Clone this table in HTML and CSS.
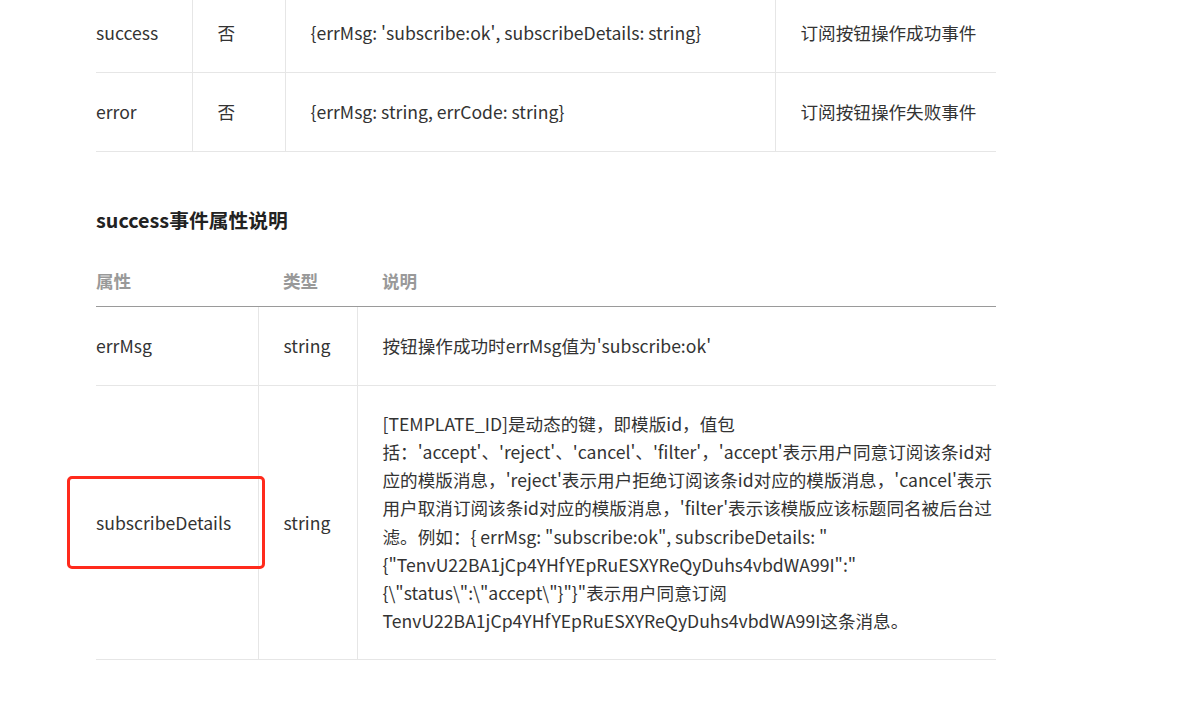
FILE: index.html
```html
<!DOCTYPE html>
<html lang="zh-CN">
<head>
<meta charset="utf-8">
<title>subscribe events</title>
<link rel="stylesheet" href="styles.css">
</head>
<body>
<div class="doc">
  <table class="tbl tbl-events">
    <colgroup><col class="c-ev1"><col class="c-ev2"><col class="c-ev3"><col class="c-ev4"></colgroup>
    <tbody>
      <tr><td>success</td><td>否</td><td>{errMsg: 'subscribe:ok', subscribeDetails: string}</td><td>订阅按钮操作成功事件</td></tr>
      <tr><td>error</td><td>否</td><td>{errMsg: string, errCode: string}</td><td>订阅按钮操作失败事件</td></tr>
    </tbody>
  </table>

  <h2 class="sec-title">success事件属性说明</h2>

  <table class="tbl tbl-props">
    <colgroup><col class="c-p1"><col class="c-p2"><col class="c-p3"></colgroup>
    <thead>
      <tr><th>属性</th><th>类型</th><th>说明</th></tr>
    </thead>
    <tbody>
      <tr><td>errMsg</td><td>string</td><td>按钮操作成功时errMsg值为'subscribe:ok'</td></tr>
      <tr>
        <td class="marked">subscribeDetails<span class="mark-box"></span></td>
        <td>string</td>
        <td class="desc">[TEMPLATE_ID]是动态的键，即模版id，值包<br>括：'accept'、'reject'、'cancel'、'filter'，'accept'表示用户同意订阅该条id对<br>应的模版消息，'reject'表示用户拒绝订阅该条id对应的模版消息，'cancel'表示<br>用户取消订阅该条id对应的模版消息，'filter'表示该模版应该标题同名被后台过<br>滤。例如：{ errMsg: "subscribe:ok", subscribeDetails: "<br>{"TenvU22BA1jCp4YHfYEpRuESXYReQyDuhs4vbdWA99I":"<br>{\"status\":\"accept\"}"}"表示用户同意订阅<br>TenvU22BA1jCp4YHfYEpRuESXYReQyDuhs4vbdWA99I这条消息。</td>
      </tr>
    </tbody>
  </table>
</div>
</body>
</html>
```
FILE: styles.css
```css
html, body {
  margin: 0;
  background: #ffffff;
}
body {
  font-family: "Noto Sans CJK SC", "Noto Sans", sans-serif;
  font-size: 17.6px;
  line-height: 28.2px;
  color: #333333;
}
.doc {
  padding-left: 96px;
  width: 900px;
}
.tbl {
  border-collapse: collapse;
  table-layout: fixed;
  width: 900px;
}
.tbl td {
  padding: 25px 8px 25px 25px;
  border-bottom: 1px solid #e6e6e6;
  border-left: 1px solid #e6e6e6;
  vertical-align: middle;
  text-align: left;
}
.tbl td:first-child {
  border-left: none;
  padding-left: 0;
}
.tbl-events {
  margin-top: -6px;
}
.c-ev1 { width: 96px; }
.c-ev2 { width: 93px; }
.c-ev3 { width: 490px; }
.c-ev4 { width: 221px; }

.sec-title {
  margin: 54px 0 21px 0;
  font-size: 19.8px;
  line-height: 28px;
  font-weight: 700;
  color: #222222;
}

.c-p1 { width: 162px; }
.c-p2 { width: 99px; }
.c-p3 { width: 639px; }

.tbl th {
  padding: 12px 8px 10px 25px;
  text-align: left;
  font-weight: 700;
  color: #999999;
  border-bottom: 1px solid #9a9a9a;
}
.tbl th:first-child {
  padding-left: 0;
}
.tbl td.desc {
  padding: 24px 2px 24px 25px;
  white-space: nowrap;
}
.marked {
  position: relative;
}
.mark-box {
  position: absolute;
  left: -29px;
  top: 90px;
  width: 198px;
  height: 93px;
  box-sizing: border-box;
  border: 3px solid #ff2a1c;
  border-radius: 5px;
}
```
